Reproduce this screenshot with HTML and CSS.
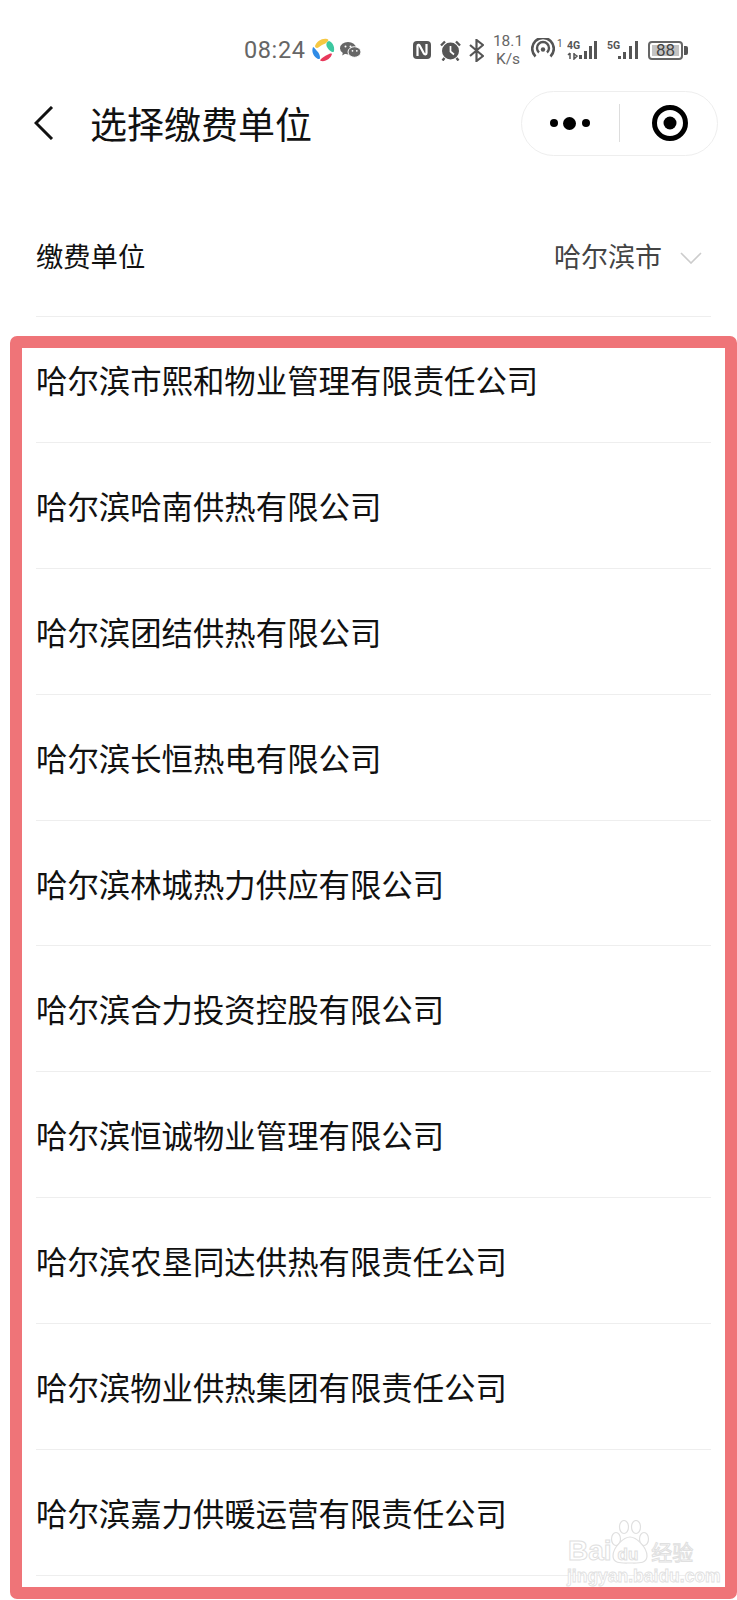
FILE: index.html
```html
<!DOCTYPE html>
<html lang="zh-CN">
<head>
<meta charset="utf-8">
<title>选择缴费单位</title>
<link rel="stylesheet" href="styles.css">
</head>
<body>
<div class="page">
  <div class="statusbar">
    <span class="time">08:24</span>
    <svg class="ic-app" width="23" height="24" viewBox="0 0 23 24">
      <path d="M3 8C5 3 10 0 15 1c1 0 2 1 1 2-1 2-4 3-6 4-2 1-4 3-5 3-1 0-2-1-2-2z" fill="#f6c843"/>
      <path d="M17 3c3 1 6 5 5 10 0 1-1 1-2 1-2-1-4-3-5-5-1-2-1-5 2-6z" fill="#3cc8a0"/>
      <path d="M20 16c-1 4-6 8-11 7-1 0-1-1 0-2 2-2 4-3 6-4 2-1 4-2 5-1z" fill="#e8395b"/>
      <path d="M1 9c-2 5 1 10 5 12 1 0 2 0 2-1 0-3-1-5-3-7C4 12 2 9 1 9z" fill="#2f8be6"/>
    </svg>
    <svg class="ic-wechat" width="21" height="16" viewBox="0 0 21 16">
      <ellipse cx="8" cy="6.2" rx="8" ry="6.2" fill="#666"/>
      <path d="M3 10l-.8 3.4L6.500 11z" fill="#666"/>
      <ellipse cx="14.500" cy="10" rx="6.500" ry="5.300" fill="#666" stroke="#fff" stroke-width="1"/>
      <circle cx="5.500" cy="4.500" r="1" fill="#fff"/>
      <circle cx="10.500" cy="4.500" r="1" fill="#fff"/>
      <circle cx="12.500" cy="8.800" r=".9" fill="#fff"/>
      <circle cx="16.800" cy="8.800" r=".9" fill="#fff"/>
    </svg>
    <svg class="ic-nfc" width="18" height="18" viewBox="0 0 18 18">
      <rect x="0" y="0" width="18" height="18" rx="4" fill="#555"/>
      <path d="M4.500 15V5c0-1.500 1.500-1.500 2-.7l4.500 8.400c.5.800 2.500 1 2.500-.7V3" fill="none" stroke="#fff" stroke-width="2.200"/>
    </svg>
    <svg class="ic-alarm" width="21" height="21" viewBox="0 0 21 21">
      <circle cx="10.500" cy="11" r="8.500" fill="#555"/>
      <path d="M1 5.500L5 1.500M20 5.500L16 1.500M4.500 18l-2 2.500M16.500 18l2 2.500" stroke="#555" stroke-width="2.400" fill="none"/>
      <path d="M10.500 6v5.500l3.500 3" stroke="#fff" stroke-width="1.700" fill="none"/>
    </svg>
    <svg class="ic-bt" width="15" height="23" viewBox="0 0 15 23">
      <path d="M1 6l13 11-6.500 5V1L14 6 1 17" fill="none" stroke="#555" stroke-width="2.200"/>
    </svg>
    <span class="speed"><span>18.1</span><span>K/s</span></span>
    <svg class="ic-hotspot" width="24" height="20" viewBox="0 0 24 20">
      <path d="M4.500 18.500A10.800 10.800 0 1 1 19.500 18.500" fill="none" stroke="#555" stroke-width="2.600"/>
      <path d="M8 14.500A6 6 0 1 1 16 14.500" fill="none" stroke="#555" stroke-width="2.400"/>
      <circle cx="12" cy="11.500" r="2.200" fill="#555"/>
    </svg>
    <span class="hot-num">1</span>
    <svg class="ic-signal-a" width="33" height="20" viewBox="0 0 33 20">
      <text class="net" x="0" y="9">4G</text>
      <path d="M3 13v6M1 15l2-2M7 13v6l3-3-3-2" stroke="#555" stroke-width="1.500" fill="none"/>
      <rect x="12" y="15" width="3" height="4" fill="#555"/>
      <rect x="17" y="11" width="3" height="8" fill="#555"/>
      <rect x="22" y="6" width="3" height="13" fill="#555"/>
      <rect x="27" y="1" width="3" height="18" fill="#555"/>
    </svg>
    <svg class="ic-signal-b" width="33" height="20" viewBox="0 0 33 20">
      <text class="net" x="0" y="9">5G</text>
      <rect x="11" y="16" width="3" height="3" fill="#555"/>
      <rect x="16" y="12" width="3" height="7" fill="#555"/>
      <rect x="22" y="6" width="3" height="13" fill="#555"/>
      <rect x="28" y="1" width="3" height="18" fill="#555"/>
    </svg>
    <span class="battery"><span class="battery-fill">88</span></span>
    <span class="battery-nub"></span>
  </div>

  <header class="navbar">
    <svg class="back" width="20" height="34" viewBox="0 0 20 34">
      <path d="M18 1L2 17l16 16" fill="none" stroke="#111" stroke-width="3"/>
    </svg>
    <h1 class="title">选择缴费单位</h1>
    <div class="capsule">
      <span class="more"><i class="dot"></i><i class="dot big"></i><i class="dot"></i></span>
      <span class="sep"></span>
      <svg class="target" width="38" height="38" viewBox="0 0 38 38">
        <circle cx="19" cy="19" r="15.500" fill="none" stroke="#000" stroke-width="5"/>
        <circle cx="19" cy="19" r="6.500" fill="#000"/>
      </svg>
    </div>
  </header>

  <main class="content">
    <div class="filter">
      <span class="filter-label">缴费单位</span>
      <span class="filter-value">哈尔滨市</span>
      <svg class="chev" width="22" height="12" viewBox="0 0 22 12">
        <path d="M1 1l10 10L21 1" fill="none" stroke="#ccc" stroke-width="1.600"/>
      </svg>
    </div>
    <ul class="list">
      <li>哈尔滨市熙和物业管理有限责任公司</li>
      <li>哈尔滨哈南供热有限公司</li>
      <li>哈尔滨团结供热有限公司</li>
      <li>哈尔滨长恒热电有限公司</li>
      <li>哈尔滨林城热力供应有限公司</li>
      <li>哈尔滨合力投资控股有限公司</li>
      <li>哈尔滨恒诚物业管理有限公司</li>
      <li>哈尔滨农垦同达供热有限责任公司</li>
      <li>哈尔滨物业供热集团有限责任公司</li>
      <li>哈尔滨嘉力供暖运营有限责任公司</li>
    </ul>
  </main>

  <div class="highlight"></div>

  <div class="watermark">
    <svg class="paw" width="40" height="44" viewBox="0 0 40 44">
      <g fill="#fff" stroke="#e0e0e0" stroke-width="1.200">
        <ellipse cx="6" cy="19" rx="4.500" ry="6.500"/>
        <ellipse cx="14" cy="7" rx="4.500" ry="6.500"/>
        <ellipse cx="26" cy="7" rx="4.500" ry="6.500"/>
        <ellipse cx="34" cy="19" rx="4.500" ry="6.500"/>
        <path d="M20 17c6 0 17 10 17 19 0 8-9 7-17 7s-17 1-17-7c0-9 11-19 17-19z"/>
      </g>
    </svg>
    <div class="wm-line"><span class="wm-bai">Bai</span><span class="wm-du">du</span><span class="wm-cn">经验</span></div>
    <div class="wm-url">jingyan.baidu.com</div>
  </div>
</div>
</body>
</html>
```

FILE: styles.css
```css
* { box-sizing: border-box; }
html, body { margin: 0; padding: 0; background: #fff; }
body { font-family: "Noto Sans CJK SC", "Noto Sans", sans-serif; color: #111; }
.page { position: relative; width: 737px; height: 1600px; overflow: hidden; background: #fff; }

.statusbar { display: flex; align-items: center; box-sizing: content-box; height: 26px; padding: 37px 0 0 244px; color: #666; }
.time { font-family: Roboto, sans-serif; font-size: 23.500px; letter-spacing: .6px; width: 68px; flex: none; color: #666; }
.ic-wechat { margin-left: 5px; }
.ic-nfc { margin-left: 52px; }
.ic-alarm { margin-left: 9px; }
.ic-bt { margin-left: 8px; }
.speed { display: flex; flex-direction: column; align-items: center; width: 32px; margin-left: 8px; font-family: Roboto, sans-serif; font-size: 15.500px; line-height: 18px; color: #666; }
.ic-hotspot { margin-left: 7px; margin-top: -4px; }
.hot-num { font-family: Roboto, sans-serif; font-size: 10px; color: #555; width: 9px; margin-left: 2px; margin-top: -14px; }
.ic-signal-a { margin-left: 1px; }
.ic-signal-b { margin-left: 7px; }
.net { font-family: Roboto, sans-serif; font-weight: 700; font-size: 10.500px; fill: #555; }
.battery { display: block; width: 35px; height: 19px; margin-left: 8px; padding: 2px; border: 2px solid #666; border-radius: 4px; }
.battery-fill { display: flex; align-items: center; justify-content: center; width: 100%; height: 100%; background: #c4c4c4; font-family: Roboto, sans-serif; font-size: 17px; line-height: 1; color: #444; }
.battery-nub { display: block; width: 4px; height: 9px; margin-left: 1px; background: #555; border-radius: 0 2px 2px 0; }

.navbar { display: flex; align-items: center; height: 66px; margin-top: 27px; padding: 0 19px 0 34px; }
.back { flex: none; }
.title { flex: 1; margin: 0 0 0 36px; font-size: 37px; font-weight: 400; line-height: 50px; color: #111; }
.capsule { display: flex; align-items: center; width: 197px; height: 65px; border: 1.500px solid #eee; border-radius: 33px; }
.more { display: flex; align-items: center; gap: 5.500px; margin-left: 27.500px; }
.dot { display: block; width: 8px; height: 8px; border-radius: 50%; background: #000; }
.dot.big { width: 13px; height: 13px; }
.sep { display: block; width: 1px; height: 38px; margin-left: 29px; background: #ddd; }
.target { margin-left: 31px; }

.content { margin-top: 40px; padding: 0 26px 0 36px; }
.filter { display: flex; align-items: center; height: 121px; border-bottom: 1px solid #eee; }
.filter-label { flex: 1; font-size: 27.300px; line-height: 40px; margin-top: -3px; color: #111; }
.filter-value { font-size: 27px; line-height: 40px; color: #444; }
.chev { margin-left: 18px; margin-right: 9px; margin-top: 4px; }
.list { list-style: none; margin: 0; padding: 0; display: grid; grid-auto-rows: 125.900px; }
.list li { display: flex; align-items: center; border-bottom: 1px solid #eee; font-size: 31.400px; color: #111; }

.highlight { position: absolute; left: 10px; top: 336px; width: 727px; height: 1263px; border: 12px solid #ef7478; border-radius: 7px; pointer-events: none; }

.watermark { position: absolute; left: 565px; top: 1507px; width: 134px; height: 76px; color: #fff; pointer-events: none; }
.paw { position: absolute; left: 45px; top: 13px; }
.wm-line { position: absolute; left: 3px; top: 28px; display: flex; align-items: baseline; white-space: nowrap; }
.wm-bai, .wm-du, .wm-cn { -webkit-text-stroke: 1px #e0e0e0; color: #fff; }
.wm-bai { font-family: "Liberation Sans", sans-serif; font-size: 28px; font-weight: 700; }
.wm-du { font-family: "Liberation Sans", sans-serif; font-size: 17px; font-weight: 700; margin-left: 6px; }
.wm-cn { font-size: 21px; margin-left: 13px; line-height: 30px; }
.wm-url { position: absolute; left: 2px; top: 60px; font-family: "Liberation Sans", sans-serif; font-size: 17.500px; font-weight: 700; line-height: 18px; color: #fff; -webkit-text-stroke: .8px #e0e0e0; white-space: nowrap; }
```
